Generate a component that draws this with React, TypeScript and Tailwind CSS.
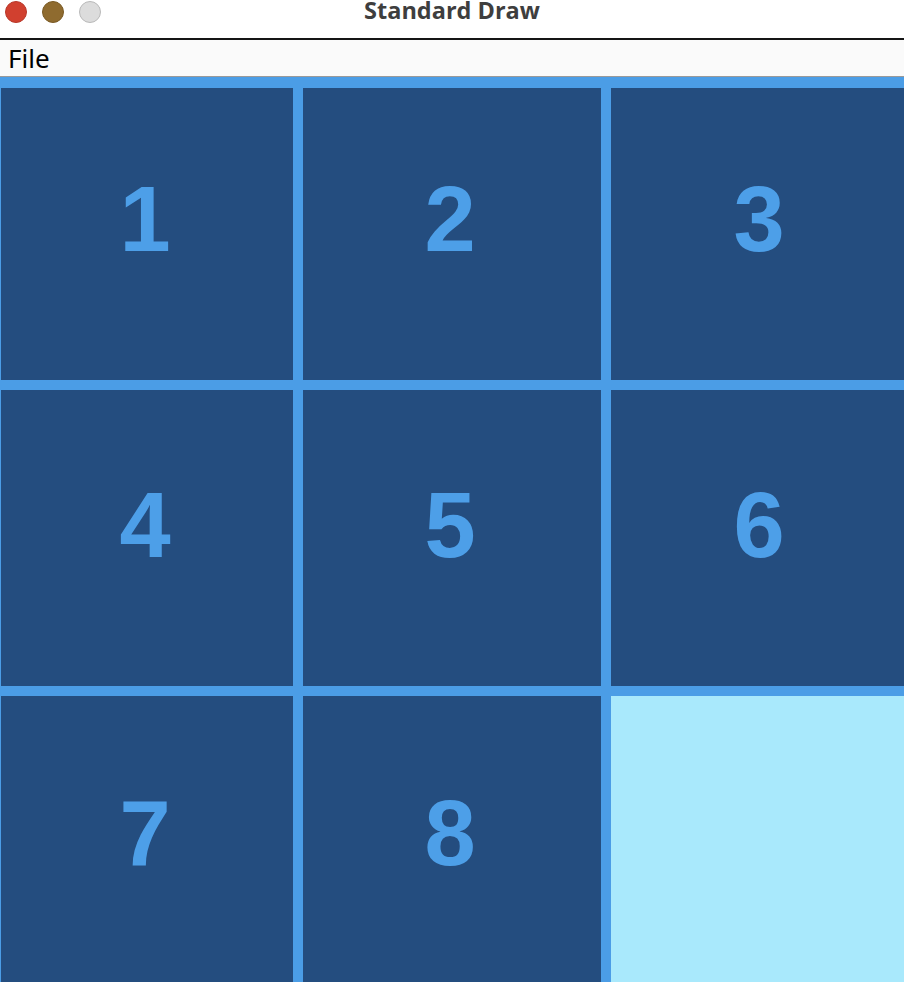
const tiles: Array<{ label: string; row: number }> = [
  { label: '1', row: 0 },
  { label: '2', row: 0 },
  { label: '3', row: 0 },
  { label: '4', row: 1 },
  { label: '5', row: 1 },
  { label: '6', row: 1 },
  { label: '7', row: 2 },
  { label: '8', row: 2 },
  { label: '', row: 2 },
];

// top padding per row so the digits sit where the reference draws them
const rowPad = ['pt-[85px]', 'pt-[89px]', 'pt-[91px]'];

function TrafficLights() {
  return (
    <div className="absolute left-[5px] top-[1px] flex items-center gap-[15px]">
      <span className="h-[22px] w-[22px] rounded-full border border-[#b8382a] bg-[#d1402f]" />
      <span className="h-[22px] w-[22px] rounded-full border border-[#7a5a24] bg-[#8f6b2f]" />
      <span className="h-[22px] w-[22px] rounded-full border border-[#b9b9b9] bg-[#dcdcdc]" />
    </div>
  );
}

function Tile({ label, row }: { label: string; row: number }) {
  if (!label) return <div className="bg-[#a9e9fc]" />;
  return (
    <div className={`flex justify-center bg-[#244d7f] ${rowPad[row]}`}>
      <span
        className="-ml-[4px] text-[92px] font-bold leading-none text-[#4d9fe8]"
        style={{ fontFamily: '"Liberation Sans", Arial, sans-serif' }}
      >
        {label}
      </span>
    </div>
  );
}

export default function App() {
  return (
    <div className="flex h-[982px] w-[904px] flex-col overflow-hidden bg-white">
      {/* window title bar */}
      <div className="relative flex h-[38px] shrink-0 items-start justify-center bg-white">
        <TrafficLights />
        <span
          className="text-[23.5px] font-bold leading-[21px] text-[#3e3e3e]"
          style={{ fontFamily: '"Open Sans", "Noto Sans", sans-serif' }}
        >
          Standard Draw
        </span>
      </div>

      {/* menu bar */}
      <div className="flex h-[39px] shrink-0 items-center border-t-2 border-b border-t-[#151515] border-b-[#9a9a9a] bg-[#fafafa] pl-[8px]">
        <span
          className="text-[26px] leading-none text-black"
          style={{ fontFamily: '"Noto Sans", "Open Sans", sans-serif' }}
        >
          File
        </span>
      </div>

      {/* puzzle board */}
      <div className="grid flex-1 grid-cols-[292px_298px_300px] grid-rows-[292px_296px_300px] gap-[10px] bg-[#4b9de6] pl-[1px] pt-[11px]">
        {tiles.map((t, i) => (
          <Tile key={i} label={t.label} row={t.row} />
        ))}
      </div>
    </div>
  );
}
